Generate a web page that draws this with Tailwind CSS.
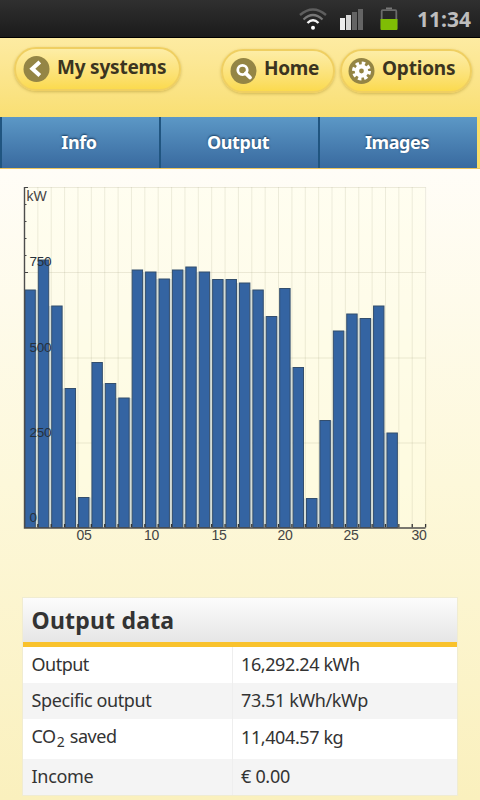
<!DOCTYPE html>
<html lang="en">
<head>
<meta charset="utf-8">
<title>Output</title>
<script src="https://cdn.jsdelivr.net/npm/@tailwindcss/browser@4"></script>
</head>
<body class="flex h-[800px] w-[480px] flex-col overflow-hidden font-['Noto_Sans',sans-serif] text-[#333]">
<div class="flex h-[38px] shrink-0 items-center border-b border-black bg-linear-to-b from-[#303030] to-[#1b1b1b] pl-[298px]">
  <svg class="h-[37px] w-[104px] shrink-0" viewBox="298 0 104 37" fill="none">
    <path d="M300 15Q313 4 326 15" stroke="#5e5e5e" stroke-width="2.4"/>
    <path d="M303.5 19.5Q313 10.5 322.5 19.5" stroke="#777" stroke-width="2.2"/>
    <path d="M307.5 23Q313 17.5 318.5 23" stroke="#f4f4f4" stroke-width="2.4"/>
    <circle cx="313" cy="27.8" r="2" fill="#fff"/>
    <path d="M340 18h5v12h-5z" fill="#eee"/><path d="M346 15h5v15h-5z" fill="#d5d5d5"/>
    <path d="M352 12h5v18h-5zM358 9h5v21h-5z" fill="#646464"/>
    <path d="M386 8.5h6" stroke="#777" stroke-width="2"/>
    <rect x="381.7" y="10.2" width="14.6" height="19" rx="1" stroke="#6a6a6a" stroke-width="1.8"/>
    <path d="M380.5 19h17v10q0 1-1 1h-15q-1 0-1-1z" fill="#7fbd05"/>
  </svg>
  <span class="relative top-px ml-[15px] text-[21px] leading-none font-bold text-[#bdbdbd]">11:34</span>
</div>
<header class="flex h-[79px] shrink-0 items-start bg-linear-to-b from-[#fdeba2] to-[#f9df73] pt-[9px] pl-[14px]">
  <div class="flex h-[44px] w-[167px] shrink-0 items-center rounded-full border-2 border-[#efcf62] bg-linear-to-b from-[#fdeda6] to-[#fbda4e] pl-[7px] shadow-[0_1px_3px_rgba(150,120,20,0.4)]">
    <svg class="size-[27px] shrink-0" viewBox="0 0 27 27"><circle cx="13.5" cy="13" r="13" fill="#948545"/><path d="M16.8 6L9.3 12.7L16.8 19.5" fill="none" stroke="#fff" stroke-width="4"/></svg>
    <span class="relative -top-[2px] ml-[7px] text-[19px] leading-none font-bold tracking-[-0.2px] whitespace-nowrap text-[#3b3420]">My systems</span>
  </div>
  <div class="mt-[2px] ml-[40px] flex h-[44px] w-[114px] shrink-0 items-center rounded-full border-2 border-[#efcf62] bg-linear-to-b from-[#fdeda6] to-[#fbda4e] pl-[7px] shadow-[0_1px_3px_rgba(150,120,20,0.4)]">
    <svg class="size-[27px] shrink-0" viewBox="0 0 27 27"><circle cx="13.5" cy="13" r="13" fill="#948545"/><circle cx="12.5" cy="12" r="4.7" fill="none" stroke="#fff" stroke-width="2.8"/><path d="M15.8 15.3l4.2 4.2" stroke="#fff" stroke-width="3.8" stroke-linecap="round"/></svg>
    <span class="relative -top-[3px] ml-[7px] text-[19px] leading-none font-bold tracking-[-0.3px] whitespace-nowrap text-[#3b3420]">Home</span>
  </div>
  <div class="mt-[2px] ml-[5px] flex h-[44px] w-[132px] shrink-0 items-center rounded-full border-2 border-[#efcf62] bg-linear-to-b from-[#fdeda6] to-[#fbda4e] pl-[6px] shadow-[0_1px_3px_rgba(150,120,20,0.4)]">
    <svg class="size-[27px] shrink-0" viewBox="0 0 27 27"><circle cx="13.5" cy="13" r="13" fill="#948545"/><circle cx="13.5" cy="13" r="4.6" fill="none" stroke="#fff" stroke-width="4.4"/><circle cx="13.5" cy="13" r="7.8" fill="none" stroke="#fff" stroke-width="3.4" stroke-dasharray="3.4 2.727"/></svg>
    <span class="relative -top-[3px] ml-[7px] text-[19px] leading-none font-bold tracking-[-0.2px] whitespace-nowrap text-[#3b3420]">Options</span>
  </div>
</header>
<nav class="flex h-[52px] shrink-0 border-b border-[#edc45c] bg-[#f9dd69] pr-[3px] text-[18px] font-bold tracking-[-0.4px] text-white">
  <div class="flex h-[51px] flex-1 items-center justify-center border-l-2 border-[#205580] bg-linear-to-b from-[#5c98c6] to-[#396a9f] pr-[3px] text-shadow-[0_-1px_2px_rgba(0,30,60,0.7)]">Info</div>
  <div class="flex h-[51px] flex-1 items-center justify-center border-l-2 border-[#205580] bg-linear-to-b from-[#5c98c6] to-[#396a9f] pr-[3px] text-shadow-[0_-1px_2px_rgba(0,30,60,0.7)]">Output</div>
  <div class="flex h-[51px] flex-1 items-center justify-center border-l-2 border-[#205580] bg-linear-to-b from-[#5c98c6] to-[#396a9f] pr-[3px] text-shadow-[0_-1px_2px_rgba(0,30,60,0.7)]">Images</div>
</nav>
<main class="flex-1 bg-linear-to-b from-[#fffdf7] via-[#fdf8da] to-[#faf0bd] px-[22px] pt-[11px]">
  <svg class="-ml-[22px] block h-[370px] w-[480px]" viewBox="0 180 480 370" font-family="Liberation Sans, Arial, sans-serif" font-size="13" fill="#444">
    <rect x="24" y="187" width="401" height="340" fill="#ffffe8" fill-opacity=".4"/>
    <g id="chart"></g>
    <text x="26.5" y="200.5" font-size="14">kW</text>
    <g fill="#26303c" font-size="13.5" letter-spacing="-.3"><text x="29.5" y="266">750</text><text x="29.5" y="352">500</text><text x="29.5" y="437">250</text><text x="29.5" y="521.5">0</text></g>
    <g font-size="14" letter-spacing="-.3"><text x="76.5" y="539.5">05</text><text x="144" y="539.5">10</text><text x="211.5" y="539.5">15</text><text x="277.5" y="539.5">20</text><text x="343.5" y="539.5">25</text><text x="411.5" y="539.5">30</text></g>
  </svg>
  <section class="mt-[47px] w-[436px] border border-[#f0ecd2] bg-white text-[18px]">
    <h2 class="flex h-[49px] items-center border-b-[5px] border-[#f9c22c] bg-linear-to-b from-[#fcfcfc] to-[#e6e6e6] pl-[8.5px] text-[23px] font-bold tracking-[0.2px]">Output data</h2>
    <div class="flex h-[36px] items-start tracking-[-0.4px]"><span class="h-[36px] w-[210px] border-r border-[#eee] pl-[8.5px] leading-[34px] tracking-[-0.5px]">Output</span><span class="pl-[8px] leading-[34px]">16,292.24 kWh</span></div>
    <div class="flex h-[36px] items-start bg-[#f4f4f4] tracking-[-0.4px]"><span class="h-[36px] w-[210px] border-r border-[#eee] pl-[8.5px] leading-[34px]">Specific output</span><span class="pl-[8px] leading-[34px]">73.51 kWh/kWp</span></div>
    <div class="flex h-[40px] items-start tracking-[-0.4px]"><span class="h-[40px] w-[210px] border-r border-[#eee] pl-[8.5px] leading-[35px]">CO<sub class="px-px text-[14px]">2</sub> saved</span><span class="pl-[8px] leading-[36px]">11,404.57 kg</span></div>
    <div class="flex h-[36px] items-start bg-[#f4f4f4] tracking-[-0.3px]"><span class="h-[36px] w-[210px] border-r border-[#eee] pl-[8.5px] leading-[34px]">Income</span><span class="pl-[8px] leading-[34px]">€ 0.00</span></div>
  </section>
</main>
<script>
const tops=[290,260,306,388.5,497.5,362.5,383.5,398,270,272,279,270,267,272,279.5,279.5,283,290,316.5,288.5,367.5,498.5,420.5,331,314,318.5,306,433];
const step=13.37;
let s='';
for(let i=0;i<=30;i++){const x=24.5+step*i;s+=`<path d="M${x} 187V527" stroke="#77734f" stroke-opacity=".13"/>`;}
[187.5,272.5,358,443].forEach(y=>s+=`<path d="M24 ${y}H425.500" stroke="#77734f" stroke-opacity=".14"/>`);
tops.forEach((y,i)=>{const x=24.7+13.41*i;
 if(i<27){const t=Math.max(y,tops[i+1]);s+=`<path d="M${x+11.9} ${t}V527" stroke="#d3dcd6" stroke-width="2.4"/>`;}
});
tops.forEach((y,i)=>{const x=24.9+13.41*i;
 s+=`<rect x="${x}" y="${y}" width="10.4" height="${527.5-y}" fill="#3464a2" stroke="#334e6d" stroke-width="1"/>`;});
for(let i=1;i<=30;i++){const x=24.5+step*i;s+=`<path d="M${x} 524V527.500" stroke="#333" stroke-width="1.300"/>`;}
for(let i=0;i<6;i++){s+=`<path d="M24 ${187.5+17*i}h${i==0||i==5?4:2.500}" stroke="#444"/>`;}
s+='<path d="M24.500 187V528H425.500" fill="none" stroke="#4d4d4d" stroke-width="1.400"/>';
document.getElementById('chart').innerHTML=s;
</script>
</body>
</html>
